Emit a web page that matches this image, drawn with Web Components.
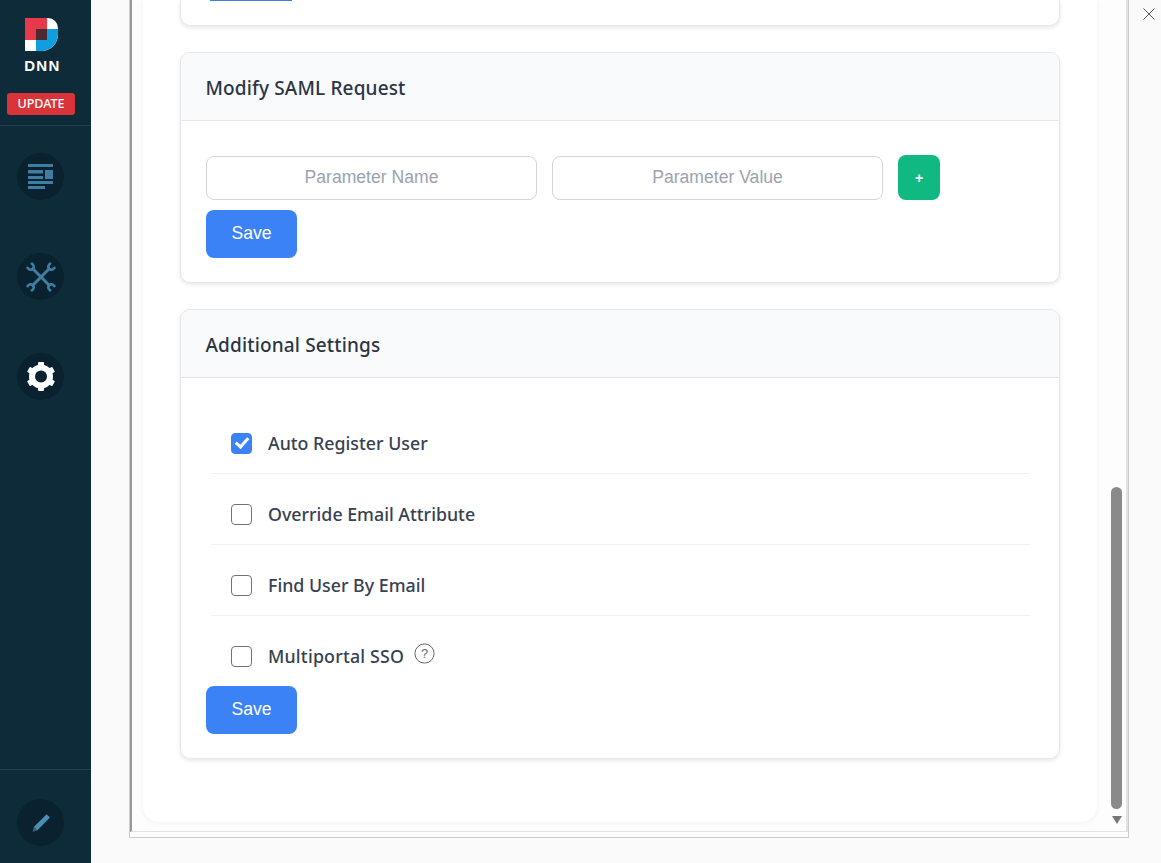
<!DOCTYPE html>
<html lang="en">
<head>
<meta charset="utf-8">
<title>SAML settings</title>
<style>
  html, body { margin: 0; height: 863px; overflow: hidden; background: #fafafa; }
  body { display: flex; font-family: "Noto Sans", "Liberation Sans", sans-serif; }
</style>
</head>
<body>
<dnn-sidebar></dnn-sidebar>
<settings-frame>
  <settings-card stub><div style="width:82px;height:1px;margin-left:29px;background:#3b7fe0"></div></settings-card>
  <settings-card heading="Modify SAML Request">
    <param-row></param-row>
    <save-button></save-button>
  </settings-card>
  <settings-card heading="Additional Settings" tall>
    <check-row label="Auto Register User" checked></check-row>
    <check-row label="Override Email Attribute"></check-row>
    <check-row label="Find User By Email"></check-row>
    <check-row label="Multiportal SSO" help last></check-row>
    <save-button></save-button>
  </settings-card>
</settings-frame>
<close-button></close-button>

<script>
class DnnSidebar extends HTMLElement {
  constructor() {
    super();
    this.attachShadow({ mode: 'open' });
    this.shadowRoot.innerHTML = `
    <style>
      :host { display: flex; flex-direction: column; flex: none; width: 91px; height: 863px; background: #0e2b39; }
      .top { height: 125px; padding-right: 9px; border-bottom: 1px solid #1f4150; display: flex; flex-direction: column; align-items: center; }
      .logo { display: block; margin: 18px 0 0 0; }
      .word { color: #fff; font: 700 15px/14px "Liberation Sans", sans-serif; letter-spacing: 1.4px; margin: 8px 0 0 3px; height: 14px; }
      .badge { margin-top: 20px; background: #d8343a; color: #fff; font: 500 12.5px/22px "Noto Sans", sans-serif; width: 68px; height: 22px; border-radius: 3px; text-align: center; }
      nav { display: flex; flex-direction: column; align-items: center; gap: 53px; padding: 27px 10px 0 0; }
      .circle { width: 47px; height: 47px; border-radius: 50%; background: #0a222f; display: flex; align-items: center; justify-content: center; }
      .bottom { margin-top: auto; height: 94px; border-top: 1px solid #1f4150; display: flex; justify-content: center; padding: 29px 10px 0 0; box-sizing: border-box; }
      svg { display: block; overflow: visible; }
    </style>
    <div class="top">
      <svg class="logo" width="33" height="33" viewBox="0 0 33 33">
        <path d="M22 0h1a10 10 0 0 1 10 10v6.5A16.5 16.5 0 0 1 16.5 33H0V0z" fill="#fff"/>
        <rect width="22" height="22" fill="#e8394a"/>
        <path d="M22 11h11v5.5A16.5 16.5 0 0 1 16.5 33H11V22h11z" fill="#0f9fdf"/>
        <rect x="11" y="11" width="11" height="11" fill="#4c2a31"/>
      </svg>
      <div class="word">DNN</div>
      <div class="badge">UPDATE</div>
    </div>
    <nav>
      <div class="circle">
        <svg width="25" height="25" viewBox="0 0 25 25" fill="#3f7da2">
          <rect width="25" height="3"/><rect y="6" width="15" height="3.5"/><rect y="12" width="15" height="3"/>
          <rect x="17" y="6" width="8" height="9"/><rect y="17" width="25" height="3"/><rect y="22" width="17" height="3"/>
        </svg>
      </div>
      <div class="circle">
        <svg width="28" height="28" viewBox="0 0 28 28" fill="none" stroke="#3f7da2">
          <g transform="rotate(45 14 14)">
            <path d="M14 1V27" stroke-width="3"/>
            <path d="M11 -3V-.5A3 3 0 0 0 17 -.5V-3M11 31V28.5A3 3 0 0 1 17 28.5V31" stroke-width="2.6"/>
          </g>
          <g transform="rotate(-45 14 14)">
            <path d="M14 1V27" stroke-width="3"/>
            <path d="M11 -3V-.5A3 3 0 0 0 17 -.5V-3M11 31V28.5A3 3 0 0 1 17 28.5V31" stroke-width="2.6"/>
          </g>
        </svg>
      </div>
      <div class="circle">
        <svg width="28" height="29" viewBox="0 0 28 29" fill="#fff">
          <circle cx="14" cy="14.5" r="9" fill="none" stroke="#fff" stroke-width="6"/>
          <rect x="11" y="0" width="6" height="29" rx="1"/>
          <rect x="11" y="0" width="6" height="29" rx="1" transform="rotate(60 14 14.5)"/>
          <rect x="11" y="0" width="6" height="29" rx="1" transform="rotate(120 14 14.5)"/>
          <circle cx="14" cy="14.5" r="6" fill="#0a222f"/>
        </svg>
      </div>
    </nav>
    <div class="bottom">
      <div class="circle">
        <svg width="20" height="20" viewBox="0 0 20 20">
          <path d="M15.6 1.2L19 4.6 6.2 17.4 2.8 14z" fill="#4a8db5"/>
          <path d="M2.8 14L6.2 17.4 1.6 18.8z" fill="#35647f"/>
        </svg>
      </div>
    </div>`;
  }
}

class SettingsFrame extends HTMLElement {
  constructor() {
    super();
    this.attachShadow({ mode: 'open' });
    this.shadowRoot.innerHTML = `
    <style>
      :host { display: block; flex: none; width: 1000px; height: 838px; margin-left: 38px; box-sizing: border-box; border: 1px solid #ccc; border-top: 0; background: #fff; }
      .inner { display: flex; box-sizing: border-box; height: 832px; border-left: 2px solid #999; border-right: 2px solid #e2e2e2; border-bottom: 1px solid #e2e2e2; background: #fdfdfd; }
      .panel { box-sizing: border-box; flex: none; width: 954px; height: 822px; margin-left: 11px; padding: 0 37px; background: #fff; border-radius: 0 0 16px 16px; box-shadow: 0 1px 6px rgba(0,0,0,.05); display: flex; flex-direction: column; gap: 26px; }
      .bar { flex: none; width: 11px; margin-left: 14px; padding-top: 487px; }
      .thumb { height: 322px; background: #8a8a8a; border-radius: 6px; }
      .arrow { width: 0; margin: 7px 0 0 0.5px; border: 5px solid transparent; border-top: 8px solid #777; border-bottom: 0; }
    </style>
    <div class="inner">
      <div class="panel"><slot></slot></div>
      <div class="bar"><div class="thumb"></div><div class="arrow"></div></div>
    </div>`;
  }
}

class SettingsCard extends HTMLElement {
  constructor() {
    super();
    this.attachShadow({ mode: 'open' });
    const heading = this.getAttribute('heading');
    this.shadowRoot.innerHTML = `
    <style>
      :host { display: block; box-sizing: border-box; background: #fff; border: 1px solid #e5e7eb; border-radius: 10px; box-shadow: 0 2px 4px rgba(0,0,0,.09); overflow: hidden; }
      :host([stub]) { height: 26px; border-top: 0; border-radius: 0 0 10px 10px; }
      header { height: 68px; box-sizing: border-box; padding-left: 24.5px; background: #f9fafb; border-bottom: 1px solid #e5e7eb; color: #2b3544; font: 500 19px/71px "Noto Sans", sans-serif; letter-spacing: .15px; }
      .body { padding: 34px 25px 24px; }
      :host([tall]) .body { padding-top: 25px; }
      :host([stub]) .body { padding: 0; }
    </style>
    ${heading ? `<header>${heading}</header>` : ''}
    <div class="body"><slot></slot></div>`;
  }
}

class ParamRow extends HTMLElement {
  constructor() {
    super();
    this.attachShadow({ mode: 'open' });
    this.shadowRoot.innerHTML = `
    <style>
      :host { display: flex; gap: 15px; align-items: center; height: 45px; margin-bottom: 10px; }
      input { box-sizing: border-box; width: 331px; height: 44px; border: 1px solid #d1d5db; border-radius: 8px; text-align: center; font: 17.6px "Liberation Sans", sans-serif; outline: none; background: #fff; margin: 0; padding: 0 12px; }
      input::placeholder { color: #9ca3af; opacity: 1; }
      button { width: 42px; height: 45px; border: 0; border-radius: 8px; background: #10b981; color: #fff; font: 700 14px "Liberation Sans", sans-serif; padding: 0; }
    </style>
    <input type="text" placeholder="Parameter Name">
    <input type="text" placeholder="Parameter Value">
    <button>+</button>`;
  }
}

class SaveButton extends HTMLElement {
  constructor() {
    super();
    this.attachShadow({ mode: 'open' });
    this.shadowRoot.innerHTML = `
    <style>
      :host { display: block; width: 91px; }
      button { display: block; width: 91px; height: 48px; border: 0; border-radius: 8px; background: #3b82f6; color: #fff; font: 17.6px "Liberation Sans", sans-serif; padding: 0 0 1px; }
    </style>
    <button>Save</button>`;
  }
}

class CheckRow extends HTMLElement {
  constructor() {
    super();
    this.attachShadow({ mode: 'open' });
    const help = this.hasAttribute('help') ? `
      <svg class="help" width="21" height="21" viewBox="0 0 21 21" fill="none" stroke="#666">
        <circle cx="10.5" cy="10.5" r="9.6"/>
        <text x="10.5" y="15" text-anchor="middle" font-family="Liberation Sans, sans-serif" font-size="13" fill="#666" stroke="none">?</text>
      </svg>` : '';
    this.shadowRoot.innerHTML = `
    <style>
      :host { display: flex; align-items: center; box-sizing: border-box; height: 71px; margin: 0 4px 0 5px; padding: 10px 0 0 20px; border-bottom: 1px solid #f0f1f3; }
      :host([last]) { border-bottom: 0; height: 70px; }
      input { appearance: none; box-sizing: border-box; flex: none; width: 21px; height: 21px; margin: 0 16px 0 0; border: 1.5px solid #6b7280; border-radius: 4px; background: #fff; position: relative; }
      input:checked { background: #3b82f6; border-color: #3b82f6; }
      input:checked::after { content: ""; position: absolute; left: 5.5px; top: 1.5px; width: 5px; height: 10px; border: solid #fff; border-width: 0 3px 3px 0; transform: rotate(42deg); }
      span { color: #374151; font: 500 17.8px/21px "Noto Sans", sans-serif; }
      :host([last]) span { letter-spacing: .2px; }
      .help { margin: -6px 0 0 10px; flex: none; }
    </style>
    <input type="checkbox" ${this.hasAttribute('checked') ? 'checked' : ''}>
    <span>${this.getAttribute('label')}</span>${help}`;
  }
}

class CloseButton extends HTMLElement {
  constructor() {
    super();
    this.attachShadow({ mode: 'open' });
    this.shadowRoot.innerHTML = `
    <style>
      :host { display: block; flex: none; width: 12px; height: 12px; margin: 8px 0 0 14px; }
      svg { display: block; }
    </style>
    <svg width="12" height="12" viewBox="0 0 12 12" stroke="#555" fill="none"><path d="M.5 .5L11.5 11.5M11.5 .5L.5 11.5"/></svg>`;
  }
}

customElements.define('dnn-sidebar', DnnSidebar);
customElements.define('settings-frame', SettingsFrame);
customElements.define('settings-card', SettingsCard);
customElements.define('param-row', ParamRow);
customElements.define('save-button', SaveButton);
customElements.define('check-row', CheckRow);
customElements.define('close-button', CloseButton);
</script>
</body>
</html>
